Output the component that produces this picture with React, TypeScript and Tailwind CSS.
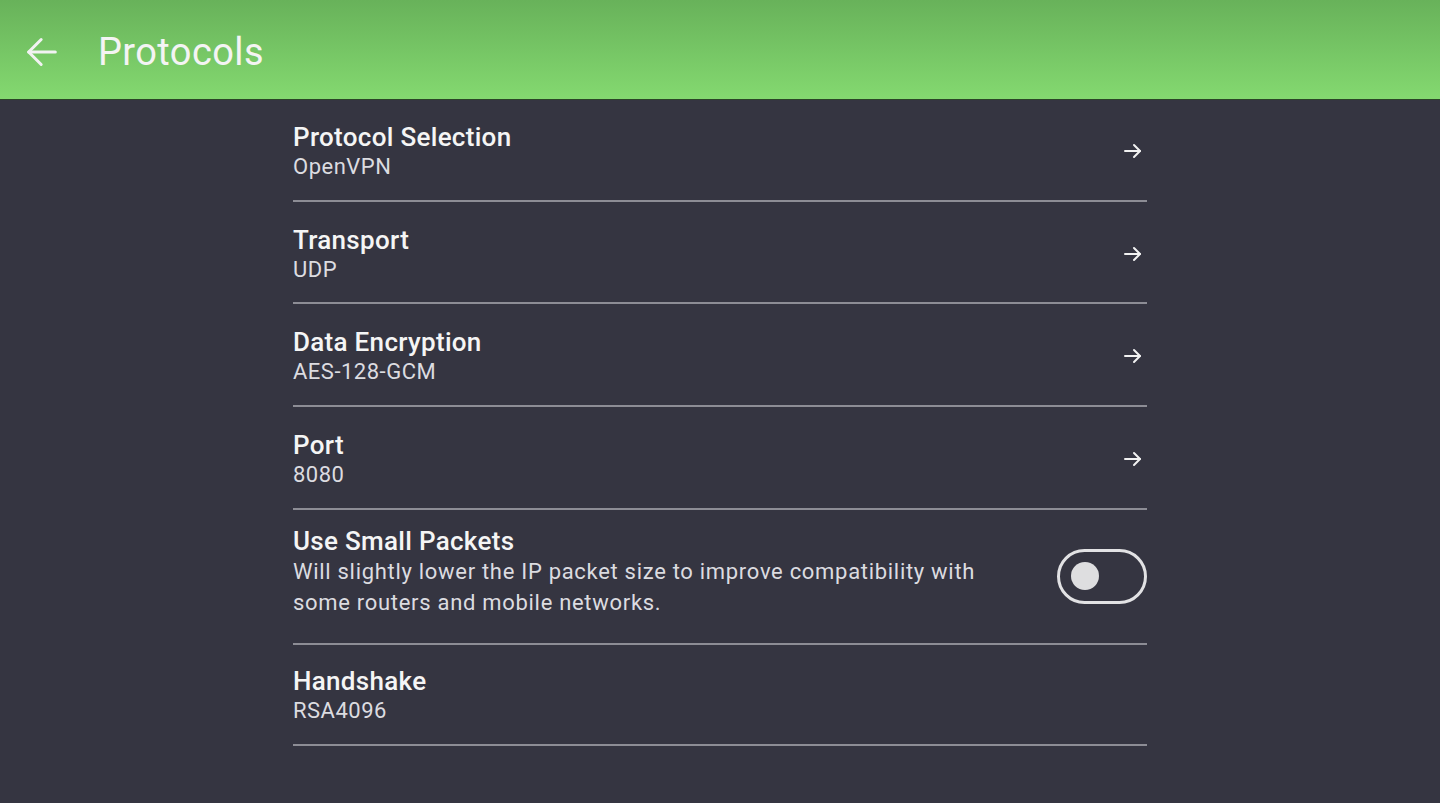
import React from "react";

const ArrowRight = () => (
  <svg width="24" height="24" viewBox="0 0 24 24" fill="none" stroke="#f2f2f2" strokeWidth="2" strokeLinecap="round" strokeLinejoin="round">
    <path d="M4 12h15" />
    <path d="M13 6l6 6-6 6" />
  </svg>
);

const ArrowLeft = () => (
  <svg width="40" height="40" viewBox="0 0 24 24" fill="none" stroke="#f2f2f2" strokeWidth="1.8" strokeLinecap="round" strokeLinejoin="round">
    <path d="M20 12H4" />
    <path d="M11.5 4.5L4 12l7.5 7.5" />
  </svg>
);

type Row = { title: string; value: string; pad: string };

const rows: Row[] = [
  { title: "Protocol Selection", value: "OpenVPN", pad: "pt-[22px] pb-[18px]" },
  { title: "Transport", value: "UDP", pad: "pt-[23px] pb-[17px]" },
  { title: "Data Encryption", value: "AES-128-GCM", pad: "pt-[23px] pb-[18px]" },
  { title: "Port", value: "8080", pad: "pt-[23px] pb-[18px]" },
];

export default function App() {
  return (
    <div
      className="w-[1440px] h-[803px] bg-[#353541] overflow-hidden flex flex-col"
      style={{ fontFamily: "Roboto, 'Noto Sans', sans-serif" }}
    >
      <div className="h-[100px] shrink-0 flex items-center bg-gradient-to-b from-[#68b25a] to-[#84d970] border-b border-[#2c4528]">
        <div className="w-[98px] pl-[22px] pt-[4px]">
          <ArrowLeft />
        </div>
        <div className="text-[38px] text-[#f4f4f4] leading-none pt-[5px] tracking-[0.4px]">Protocols</div>
      </div>
      <div className="w-[854px] ml-[293px] flex flex-col">
        {rows.map((r) => (
          <div
            key={r.title}
            className={`flex items-center border-b-2 border-[#8d8d95] ${r.pad}`}
          >
            <div className="flex-1 flex flex-col">
              <div className="text-[26px] font-medium text-[#f5f5f5] leading-[30px] tracking-[0.3px]">{r.title}</div>
              <div className="text-[22px] text-[#dcdce0] leading-[30px] tracking-[0.5px]">{r.value}</div>
            </div>
            <div className="pr-[2px] pb-[2px]">
              <ArrowRight />
            </div>
          </div>
        ))}
        <div className="flex items-center border-b-2 border-[#8d8d95] pt-[16px] pb-[25px]">
          <div className="flex-1 flex flex-col">
            <div className="text-[26px] font-medium text-[#f5f5f5] leading-[30px] tracking-[0.3px]">Use Small Packets</div>
            <div className="text-[22px] text-[#dcdce0] leading-[31px] tracking-[0.7px] w-[720px]">
              Will slightly lower the IP packet size to improve compatibility with some routers and mobile networks.
            </div>
          </div>
          <div className="w-[90px] h-[55px] mt-[8px] rounded-full border-[3px] border-[#e2e2e4] flex items-center pl-[11px]">
            <div className="w-[28px] h-[28px] rounded-full bg-[#dedee0]" />
          </div>
        </div>
        <div className="flex items-center border-b-2 border-[#8d8d95] pt-[21px] pb-[18px]">
          <div className="flex-1 flex flex-col">
            <div className="text-[26px] font-medium text-[#f5f5f5] leading-[30px] tracking-[0.3px]">Handshake</div>
            <div className="text-[22px] text-[#dcdce0] leading-[30px] tracking-[0.5px]">RSA4096</div>
          </div>
        </div>
      </div>
    </div>
  );
}
